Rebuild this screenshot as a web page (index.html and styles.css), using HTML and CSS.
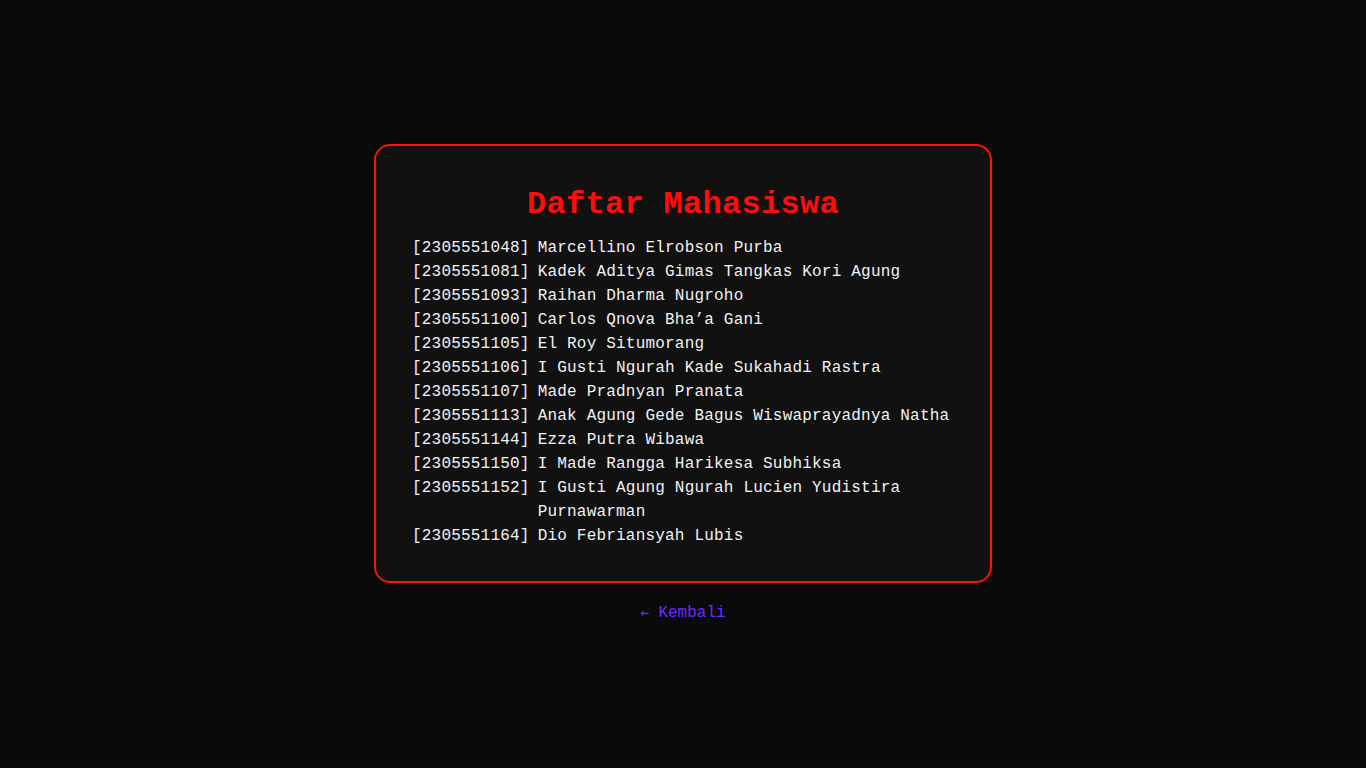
FILE: index.html
```html
<!DOCTYPE html>
<html lang="id">
<head>
<meta charset="utf-8">
<title>Daftar Mahasiswa</title>
<link rel="stylesheet" href="styles.css">
</head>
<body>
<main class="page">
  <section class="card">
    <h1 class="title">Daftar Mahasiswa</h1>
    <ul class="list">
      <li class="row"><span class="nim">[2305551048]</span><span class="name">Marcellino Elrobson Purba</span></li>
      <li class="row"><span class="nim">[2305551081]</span><span class="name">Kadek Aditya Gimas Tangkas Kori Agung</span></li>
      <li class="row"><span class="nim">[2305551093]</span><span class="name">Raihan Dharma Nugroho</span></li>
      <li class="row"><span class="nim">[2305551100]</span><span class="name">Carlos Qnova Bha’a Gani</span></li>
      <li class="row"><span class="nim">[2305551105]</span><span class="name">El Roy Situmorang</span></li>
      <li class="row"><span class="nim">[2305551106]</span><span class="name">I Gusti Ngurah Kade Sukahadi Rastra</span></li>
      <li class="row"><span class="nim">[2305551107]</span><span class="name">Made Pradnyan Pranata</span></li>
      <li class="row"><span class="nim">[2305551113]</span><span class="name">Anak Agung Gede Bagus Wiswaprayadnya Natha</span></li>
      <li class="row"><span class="nim">[2305551144]</span><span class="name">Ezza Putra Wibawa</span></li>
      <li class="row"><span class="nim">[2305551150]</span><span class="name">I Made Rangga Harikesa Subhiksa</span></li>
      <li class="row"><span class="nim">[2305551152]</span><span class="name">I Gusti Agung Ngurah Lucien Yudistira Purnawarman</span></li>
      <li class="row"><span class="nim">[2305551164]</span><span class="name">Dio Febriansyah Lubis</span></li>
    </ul>
  </section>
  <a class="back" href="#"><span class="arrow">←</span> Kembali</a>
</main>
</body>
</html>
```
FILE: styles.css
```css
* { box-sizing: border-box; }
html, body {
  margin: 0;
  padding: 0;
  background: #0a0a0a;
}
body {
  font-family: "Liberation Mono", "DejaVu Sans Mono", monospace;
  color: #f2f2f2;
  font-size: 16px;
  line-height: 24px;
}
.page {
  min-height: 768px;
  display: flex;
  flex-direction: column;
  align-items: center;
  justify-content: center;
}
.card {
  width: 618px;
  background: #111112;
  border: 2px solid #ff1010;
  border-radius: 16px;
  padding: 40px 36px 33px 36px;
}
.title {
  margin: 0 0 12px 0;
  text-align: center;
  color: #ff0d0d;
  font-size: 32px;
  line-height: 38px;
  font-weight: 700;
  letter-spacing: 0.3px;
}
.list {
  list-style: none;
  margin: 0;
  padding: 0;
}
.row {
  display: flex;
  gap: 8px;
}
.nim {
  flex: none;
  letter-spacing: 0.2px;
}
.name {
  flex: 1;
  letter-spacing: 0.2px;
}
.back {
  margin-top: 17px;
  color: #6a2cff;
  text-decoration: none;
  font-size: 16px;
  line-height: 24px;
}
.arrow {
  font-family: "DejaVu Sans Mono", monospace;
  font-size: 14px;
}
```
